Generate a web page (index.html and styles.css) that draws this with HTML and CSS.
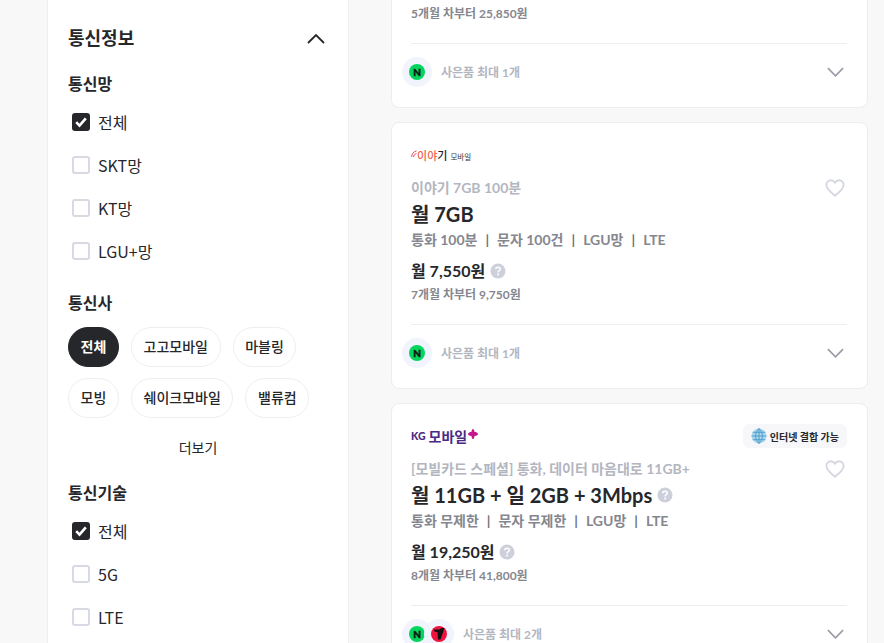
FILE: index.html
```html
<!DOCTYPE html>
<html lang="ko">
<head>
<meta charset="utf-8">
<title>요금제</title>
<link rel="stylesheet" href="styles.css">
</head>
<body>
<svg class="defs" width="0" height="0" aria-hidden="true">
  <symbol id="chev" viewBox="0 0 18 10"><path d="M1 1l8 8 8-8" fill="none" stroke="currentColor" stroke-width="1.8"/></symbol>
  <symbol id="heart" viewBox="0 0 22 20"><path d="M11 18.600C5.500 14.400 1.400 11 1.400 6.700 1.400 3.600 3.700 1.400 6.500 1.400c1.900 0 3.500 1 4.500 2.700 1-1.700 2.600-2.700 4.500-2.700 2.800 0 5.100 2.200 5.100 5.300 0 4.300-4.100 7.700-9.600 11.900z" fill="none" stroke="#d4d6e0" stroke-width="2"/></symbol>
  <symbol id="help" viewBox="0 0 16 16"><circle cx="8" cy="8" r="7.500" fill="#cdd0db"/><path d="M5.800 6.300c0-1.300 1-2.100 2.300-2.100s2.200.8 2.200 1.900c0 1.600-2.200 1.600-2.200 3.300" fill="none" stroke="#fff" stroke-width="1.500"/><circle cx="8.100" cy="11.600" r="1" fill="#fff"/></symbol>
  <symbol id="tick" viewBox="0 0 18 18"><path d="M4.200 9.200l3.300 3.400 6.300-7.200" fill="none" stroke="#fff" stroke-width="2.600"/></symbol>
</svg>
<div class="page">
  <aside class="side">
    <div class="side-head">
      <h2>통신정보</h2>
      <svg class="chev up"><use href="#chev"/></svg>
    </div>
    <h3 class="sec first">통신망</h3>
    <ul class="checks">
      <li><span class="box on"><svg><use href="#tick"/></svg></span>전체</li>
      <li><span class="box"></span>SKT망</li>
      <li><span class="box"></span>KT망</li>
      <li><span class="box"></span>LGU+망</li>
    </ul>
    <h3 class="sec carrier">통신사</h3>
    <div class="pills">
      <span class="pill on">전체</span>
      <span class="pill">고고모바일</span>
      <span class="pill">마블링</span>
      <span class="pill">모빙</span>
      <span class="pill">쉐이크모바일</span>
      <span class="pill">밸류컴</span>
    </div>
    <div class="more">더보기</div>
    <h3 class="sec tech">통신기술</h3>
    <ul class="checks">
      <li><span class="box on"><svg><use href="#tick"/></svg></span>전체</li>
      <li><span class="box"></span>5G</li>
      <li><span class="box"></span>LTE</li>
    </ul>
  </aside>
  <main class="list">
    <article class="card cut">
      <p class="sub">5개월 차부터 25,850원</p>
      <div class="gift">
        <span class="disc"><span class="n">N</span></span>
        <span class="gift-text">사은품 최대 1개</span>
        <svg class="chev"><use href="#chev"/></svg>
      </div>
    </article>
    <article class="card">
      <div class="logo-row"><span class="logo-ey"><svg viewBox="0 0 6 8"><path d="M.7 7C.7 4 2.500 1.500 5.500 1M2.600 7c0-1.800 1-3 2.900-3.300" fill="none" stroke="#e8384f" stroke-width=".9"/></svg><i>이</i><i>야</i><b>기</b><small>모바일</small></span></div>
      <div class="name-row"><span class="name">이야기 7GB 100분</span><svg class="heart"><use href="#heart"/></svg></div>
      <h4 class="title">월 7GB</h4>
      <p class="spec">통화 100분<s>|</s>문자 100건<s>|</s>LGU망<s>|</s>LTE</p>
      <p class="price">월 7,550원<svg class="help"><use href="#help"/></svg></p>
      <p class="sub">7개월 차부터 9,750원</p>
      <div class="gift">
        <span class="disc"><span class="n">N</span></span>
        <span class="gift-text">사은품 최대 1개</span>
        <svg class="chev"><use href="#chev"/></svg>
      </div>
    </article>
    <article class="card">
      <div class="logo-row">
        <span class="logo-kg"><em>KG</em> 모바일<svg viewBox="0 0 12 12"><path d="M6 0c1 0 1.500 1.300 1.700 3.400C10.500 3.800 12 5 12 6s-1.500 2.200-4.300 2.600C7.500 10.700 7 12 6 12s-1.500-1.300-1.700-3.400C1.500 8.200 0 7 0 6s1.500-2.200 4.300-2.600C4.500 1.300 5 0 6 0z" fill="#c4198c"/></svg></span>
        <span class="badge"><svg viewBox="0 0 16 16"><circle cx="8" cy="8" r="7.500" fill="#a9d8ee"/><path d="M.5 8h15M1.800 4.300h12.400M1.800 11.700h12.400M8 .5v15M8 .5C3.500 4.500 3.500 11.500 8 15.500M8 .5c4.500 4 4.500 11 0 15" fill="none" stroke="#3f93c4" stroke-width=".8"/></svg>인터넷 결합 가능</span>
      </div>
      <div class="name-row"><span class="name">[모빌카드 스페셜] 통화, 데이터 마음대로 11GB+</span><svg class="heart"><use href="#heart"/></svg></div>
      <h4 class="title">월 11GB + 일 2GB + 3Mbps<svg class="help"><use href="#help"/></svg></h4>
      <p class="spec">통화 무제한<s>|</s>문자 무제한<s>|</s>LGU망<s>|</s>LTE</p>
      <p class="price">월 19,250원<svg class="help"><use href="#help"/></svg></p>
      <p class="sub">8개월 차부터 41,800원</p>
      <div class="gift">
        <span class="disc"><span class="n">N</span></span>
        <span class="disc second"><svg class="v" viewBox="0 0 16 16"><circle cx="8" cy="8" r="8" fill="#f0123f"/><path d="M2.500 3.500h6.500l1-1.500h3.500L9.500 13.500H7L6.500 6H4z" fill="#111"/></svg></span>
        <span class="gift-text">사은품 최대 2개</span>
        <svg class="chev"><use href="#chev"/></svg>
      </div>
    </article>
  </main>
</div>
</body>
</html>
```
FILE: styles.css
```css
* { box-sizing: border-box; }
html, body { margin: 0; height: 643px; overflow: hidden; }
body {
  background: #f8f8f9;
  color: #26272b;
  font-family: Lato, "Noto Sans CJK KR", sans-serif;
}
.defs { display: block; height: 0; }
h2, h3, h4, p, ul { margin: 0; padding: 0; }
ul { list-style: none; }
s { text-decoration: none; }
.page { display: flex; align-items: flex-start; padding-left: 47px; gap: 42px; }

/* filter column */
.side {
  flex: 0 0 302px;
  height: 643px;
  background: #fff;
  border: 1px solid #efeff2;
  border-width: 0 1px;
  padding: 24px 20px 0;
  font-family: "Noto Sans CJK KR", sans-serif;
}
.side-head { display: flex; justify-content: space-between; align-items: center; height: 26px; }
.side-head h2 { font-size: 18px; line-height: 26px; font-weight: 700; }
.chev { width: 17px; height: 10px; color: #9a9ca6; flex: none; }
.chev.up { width: 18px; color: #26272b; transform: rotate(180deg); margin: 4px 3px 0 0; }
.card .chev { margin-right: 3px; }
.sec { font-size: 16px; line-height: 24px; font-weight: 700; }
.sec.first { margin-top: 21px; }
.sec.carrier { margin-top: 18px; }
.sec.tech { margin-top: 23px; }
.checks { margin-top: 5px; }
.checks li { display: flex; align-items: center; height: 43px; padding-left: 4px; font-size: 16px; gap: 8px; }
.box { width: 18px; height: 18px; border: 2px solid #d7d9e3; border-radius: 3px; background: #fff; flex: none; }
.box.on { background: #26272b; border: 0; }
.box svg { display: block; width: 18px; height: 18px; }
.pills { display: flex; flex-wrap: wrap; gap: 11px 12px; margin-top: 13px; }
.pill {
  height: 40px;
  padding: 0 11.6px 3px;
  display: flex;
  align-items: center;
  border: 1px solid #eeeef1;
  border-radius: 20px;
  font-size: 14px;
  font-weight: 500;
}
.pill.on { background: #26272b; color: #fff; border-color: #26272b; font-weight: 700; }
.more { margin-top: 19px; text-align: center; font-size: 14px; line-height: 20px; }

/* plan cards */
.list { flex: 0 0 477px; display: flex; flex-direction: column; gap: 14px; }
.card {
  background: #fff;
  border: 1px solid #ededf1;
  border-radius: 8px;
  padding: 20px 20px 0 19px;
}
.card.cut { padding-top: 5px; border-top: 0; border-radius: 0 0 8px 8px; }
.logo-row { display: flex; justify-content: space-between; align-items: center; height: 24px; }
.logo-ey { display: flex; align-items: center; font-size: 11px; font-weight: 500; line-height: 18px; padding-top: 2px; }
.logo-ey svg { width: 6px; height: 8px; margin: -5px 0 0 0; }
.logo-ey i { font-style: normal; color: #f0624d; }
.logo-ey b { font-weight: 500; color: #222; }
.logo-ey small { font-size: 7.500px; margin: 3px 0 0 3px; font-weight: 400; color: #333; }
.logo-kg { display: flex; align-items: center; gap: 3px; color: #4a2a84; font-size: 14px; font-weight: 700; }
.logo-kg em { font-style: normal; font-size: 10.500px; font-weight: 900; }
.logo-kg svg { width: 10px; height: 10px; margin: -5px 0 0 -2px; }
.badge {
  display: flex;
  align-items: center;
  gap: 3px;
  height: 24px;
  padding: 0 8px;
  background: #f7f7f9;
  border-radius: 6px;
  font-size: 10px;
  font-weight: 700;
}
.badge svg { width: 16px; height: 16px; }
.name-row { display: flex; justify-content: space-between; align-items: center; height: 20px; margin-top: 11px; }
.name { font-size: 14px; font-weight: 700; color: #b4b6bf; line-height: 20px; }
.heart { width: 20px; height: 18px; flex: none; margin-right: 2px; }
.title { display: flex; align-items: center; gap: 5px; font-size: 20px; line-height: 30px; font-weight: 700; margin: 1px 0; }
.spec { font-size: 14px; line-height: 20px; font-weight: 700; color: #85878f; }
.spec s { margin: 0 8px; color: #6f7079; }
.price { display: flex; align-items: center; gap: 5px; font-size: 16px; line-height: 24px; font-weight: 700; margin-top: 9px; }
.help { width: 16px; height: 16px; flex: none; }
.sub { font-size: 12px; line-height: 18px; font-weight: 700; color: #85878f; margin-top: 3px; }
.card.cut .sub { margin-top: 0; }
.gift {
  display: flex;
  align-items: center;
  margin: 20px 0 0;
  padding: 13px 0 21px;
  border-top: 1px solid #ededf1;
  height: 64px;
}
.disc {
  width: 30px;
  height: 30px;
  margin-left: -9px;
  border-radius: 50%;
  background: #f1f4fd;
  display: flex;
  align-items: center;
  justify-content: center;
  flex: none;
}
.disc.second { margin-left: -8px; }
.n {
  width: 16px;
  height: 16px;
  border-radius: 50%;
  background: #02d55e;
  color: #111;
  font-size: 10px;
  font-weight: 900;
  line-height: 16px;
  text-align: center;
  -webkit-text-stroke: 0.400px #111;
}
.v { width: 16px; height: 16px; }
.gift-text { flex: 1; margin-left: 9px; font-size: 12px; font-weight: 700; color: #b4b6bf; }
```
